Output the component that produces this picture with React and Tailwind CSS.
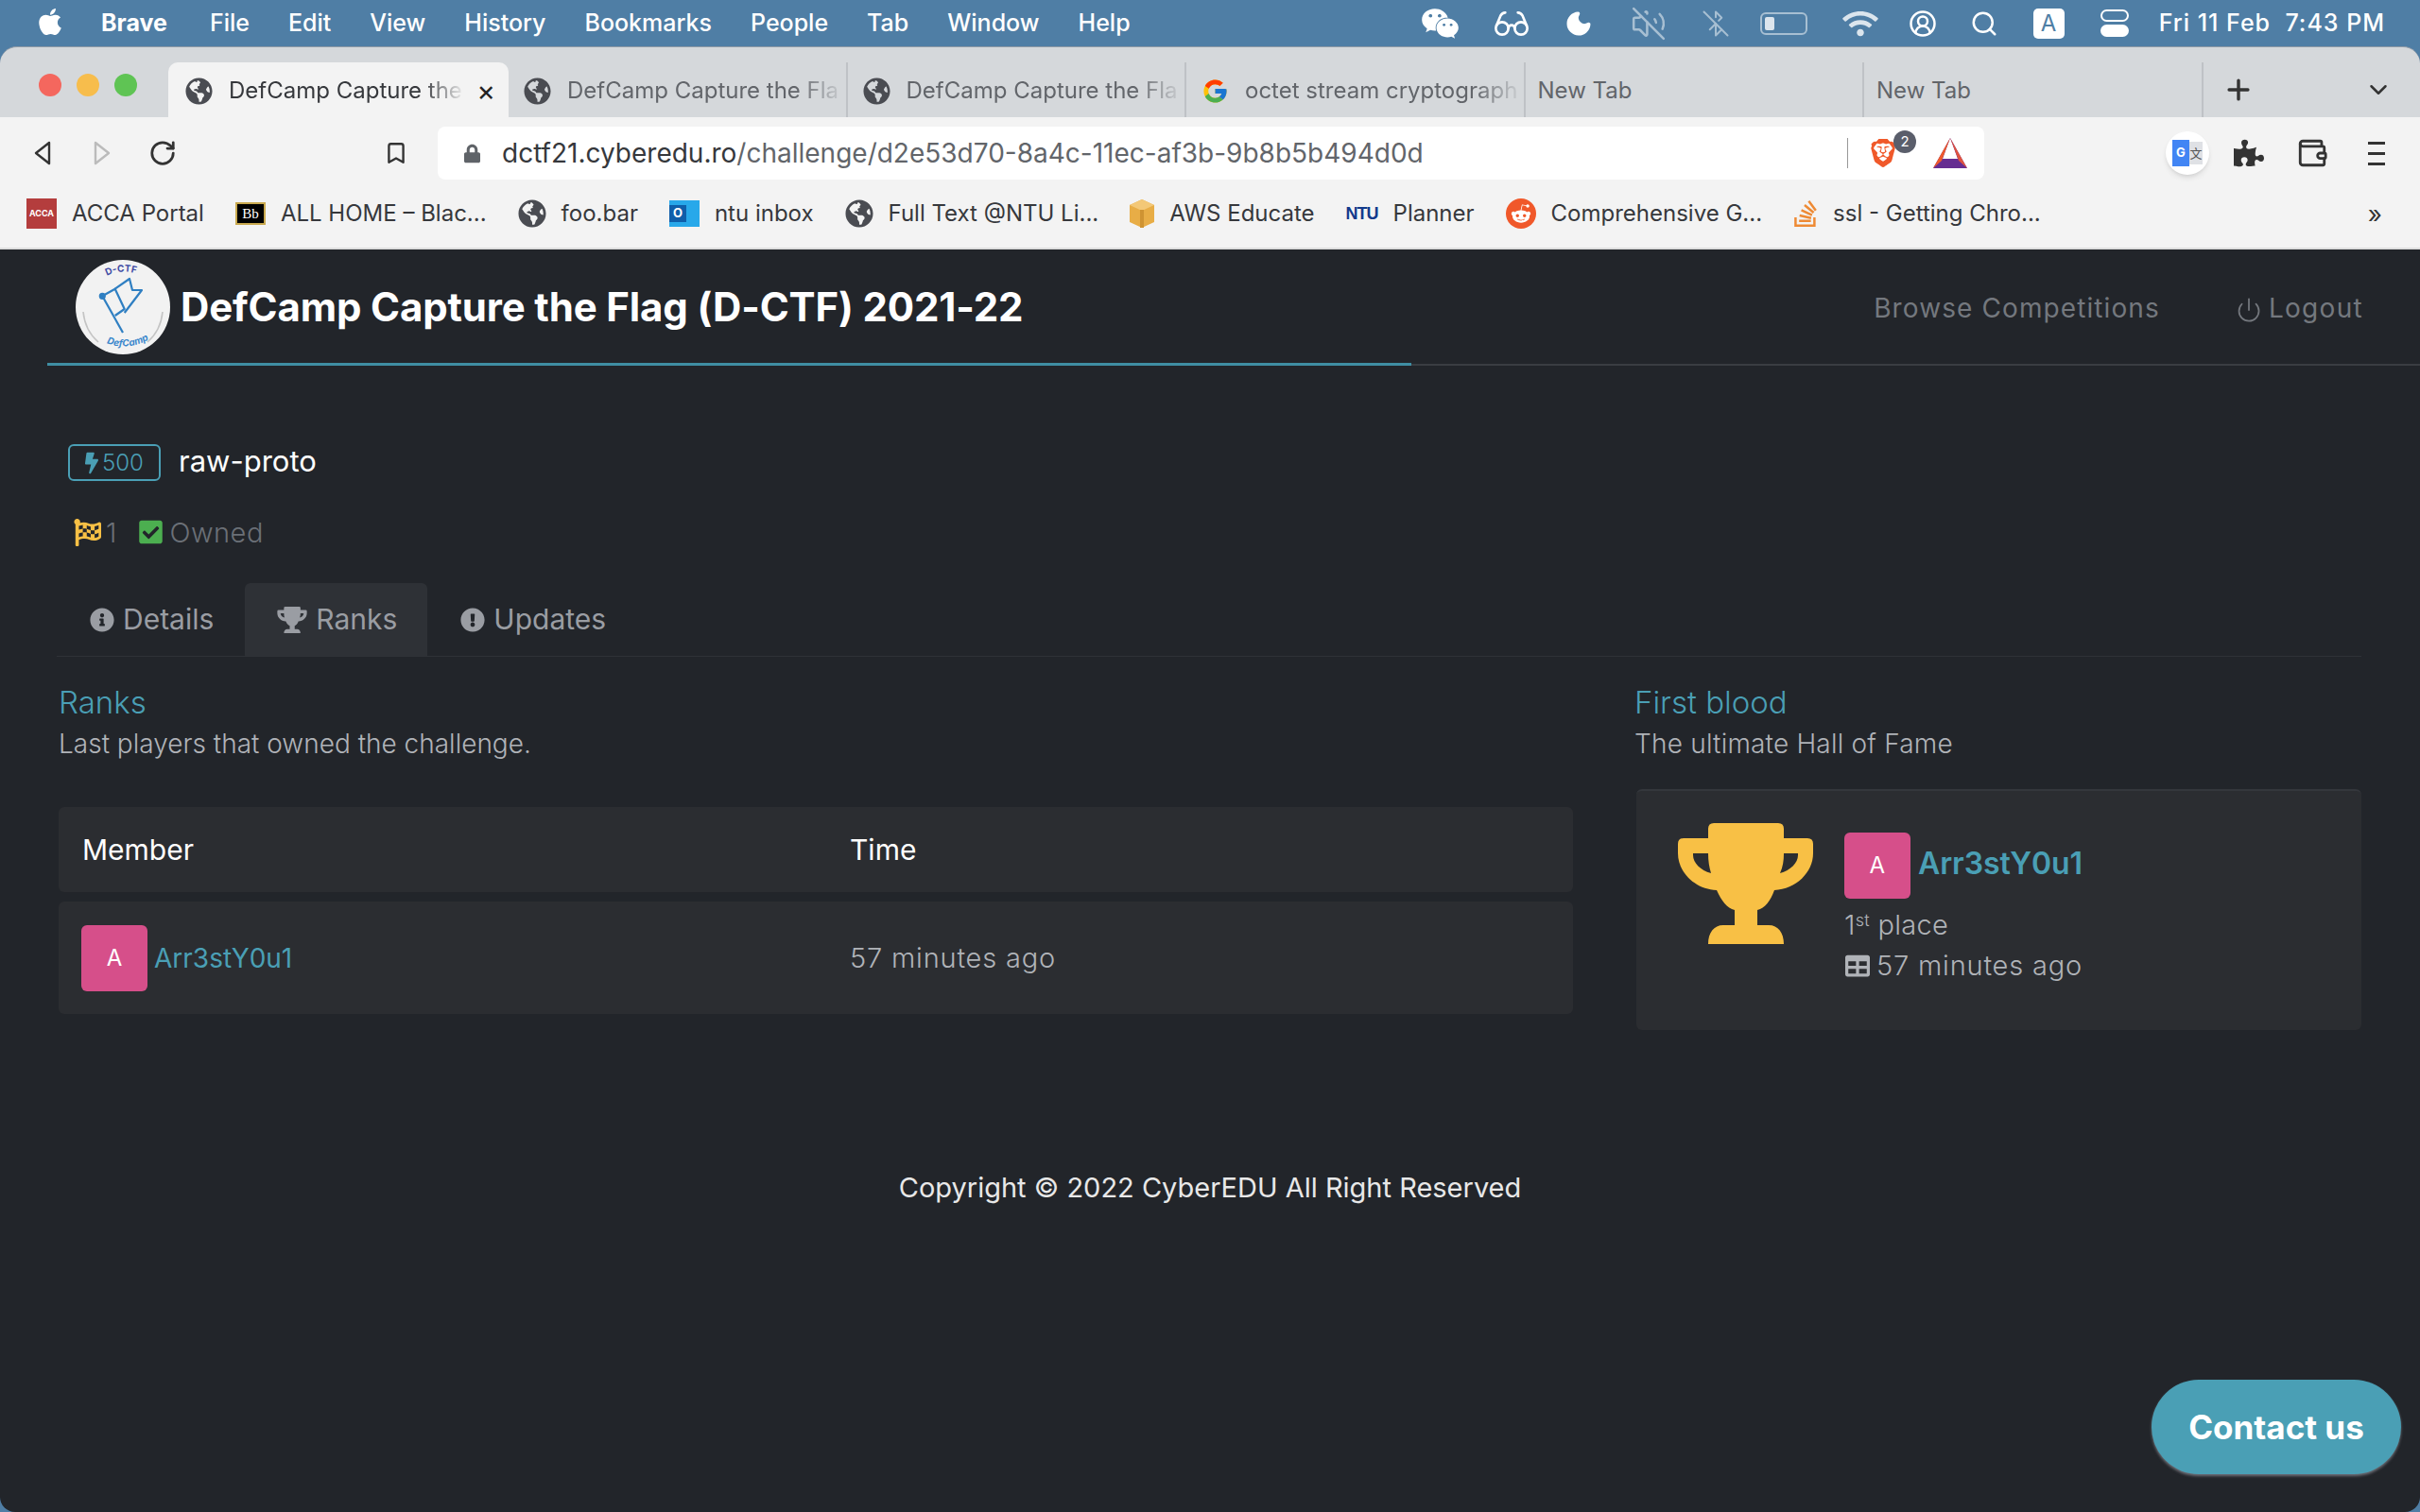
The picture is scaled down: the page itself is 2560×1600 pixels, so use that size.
import { Bookmark, BluetoothOff, CircleUserRound, ChevronDown, Glasses, Moon, Plus, RotateCw, Search, VolumeOff, Wallet, Power } from 'lucide-react';
import {
  FaApple,
  FaBolt,
  FaCheckSquare,
  FaExclamationCircle,
  FaFlagCheckered,
  FaGlobeAmericas,
  FaInfoCircle,
  FaLock,
  FaPuzzlePiece,
  FaRedditAlien,
  FaStackOverflow,
  FaTable,
  FaWeixin,
  FaWifi,
} from 'react-icons/fa';
import { FcGoogle } from 'react-icons/fc';
import { SiBrave } from 'react-icons/si';

const menuItems = ['File', 'Edit', 'View', 'History', 'Bookmarks', 'People', 'Tab', 'Window', 'Help'];

function Trophy({ className }) {
  return (
    <svg viewBox="0 0 143 128" className={className} fill="currentColor" fillRule="evenodd">
      <path d="M38 0 H106 Q112 0 112 6 V16 H137 Q143 16 143 22 V32 C143 52 125 70 102 71 C98 82 92 90 84 92 V108 H96 C106 108 112 116 112 128 H32 C32 116 38 108 48 108 H60 V92 C52 90 46 82 41 71 C18 70 0 52 0 32 V22 Q0 16 6 16 H32 V6 Q32 0 38 0 Z M16 32 V34 C16 42 24 50 35 53 C33 46 32 40 32 32 Z M127 32 H112 C112 40 111 46 108 53 C119 50 127 42 127 34 Z" />
    </svg>
  );
}

function MenuBar() {
  return (
    <div className="h-[49px] flex items-center text-white text-[25px] font-['Inter',sans-serif] shrink-0">
      <FaApple className="ml-[38px] w-[30px] h-[32px] mb-[4px]" />
      <span className="ml-[39px] font-bold">Brave</span>
      <div className="ml-[45px] flex gap-[41px] font-medium">
        {menuItems.map((m) => (
          <span key={m}>{m}</span>
        ))}
      </div>
      <div className="ml-auto mr-[37px] flex items-center">
        <FaWeixin className="w-[41px] h-[36px]" />
        <Glasses className="ml-[35px] w-[40px] h-[40px]" strokeWidth={1.6} />
        <Moon className="ml-[36px] w-[30px] h-[32px]" fill="white" />
        <VolumeOff className="ml-[40px] w-[38px] h-[38px] opacity-50" strokeWidth={1.6} />
        <BluetoothOff className="ml-[37px] w-[30px] h-[32px] opacity-50" strokeWidth={1.6} />
        <div className="ml-[32px] w-[50px] h-[24px] rounded-[6px] border-2 border-white/50 p-[3px]">
          <div className="w-[10px] h-full rounded-[2px] bg-white/80"></div>
        </div>
        <FaWifi className="ml-[37px] w-[38px] h-[30px] opacity-80" />
        <CircleUserRound className="ml-[32px] w-[30px] h-[30px]" strokeWidth={2} />
        <Search className="ml-[35px] w-[30px] h-[30px]" strokeWidth={2} />
        <div className="ml-[37px] w-[33px] h-[32px] bg-white rounded-[5px] flex items-center justify-center text-[#4f7ea5] text-[24px]">
          A
        </div>
        <div className="ml-[38px] w-[30px] h-[30px] flex flex-col gap-[3px]">
          <div className="h-[13px] rounded-full border-[2px] border-white"></div>
          <div className="h-[13px] rounded-full bg-white"></div>
        </div>
        <span className="ml-[32px] font-medium tracking-[1px] whitespace-pre">Fri 11 Feb  7:43 PM</span>
      </div>
    </div>
  );
}

function BrowserTab({ title, icon, active, fade }) {
  return (
    <div
      className={`h-[58px] flex items-center shrink-0 pt-[2px] text-[24px] ${
        active
          ? 'bg-[#f3f3f3] rounded-t-[10px] text-[#36383c] w-[360px] pl-[18px]'
          : `w-[358.5px] text-[#62656a] border-r-2 border-[#bfc2c6] ${icon ? 'pl-[16px]' : 'pl-[13px]'}`
      }`}
    >
      {icon}
      <span
        className={`whitespace-nowrap overflow-hidden flex-1 ${icon ? 'ml-[17px]' : ''} ${
          fade ? '[mask-image:linear-gradient(to_right,black_82%,transparent)]' : ''
        }`}
      >
        {title}
      </span>
      {active && <span className="text-[#222] text-[30px] leading-none ml-[12px] mr-[14px]">×</span>}
    </div>
  );
}

function TabStrip() {
  const globe = <FaGlobeAmericas className="w-[29px] h-[29px] text-[#4a4c52] shrink-0" />;
  return (
    <div className="h-[75px] flex items-end bg-[#d5d8db] shrink-0 border-t border-[#8d99a5] rounded-t-[18px]">
      <div className="flex gap-[16px] pl-[41px] w-[178px] h-full items-center pt-[6px] shrink-0">
        <div className="w-[24px] h-[24px] rounded-full bg-[#f4675e] shrink-0"></div>
        <div className="w-[24px] h-[24px] rounded-full bg-[#f7bd4c] shrink-0"></div>
        <div className="w-[24px] h-[24px] rounded-full bg-[#5fc454] shrink-0"></div>
      </div>
      <BrowserTab active fade title="DefCamp Capture the" icon={globe} />
      <BrowserTab fade title="DefCamp Capture the Fla" icon={globe} />
      <BrowserTab fade title="DefCamp Capture the Fla" icon={globe} />
      <BrowserTab fade title="octet stream cryptograph" icon={<FcGoogle className="w-[29px] h-[29px] shrink-0" />} />
      <BrowserTab title="New Tab" />
      <BrowserTab title="New Tab" />
      <div className="flex-1 h-[58px] flex items-center">
        <Plus className="ml-[20px] w-[34px] h-[34px] text-[#333]" strokeWidth={2.4} />
        <ChevronDown className="ml-auto mr-[29px] w-[30px] h-[30px] text-[#333]" strokeWidth={2} />
      </div>
    </div>
  );
}

function Toolbar() {
  return (
    <div className="h-[66px] pt-[10px] flex items-center bg-[#f3f3f3] shrink-0 relative">
      <svg viewBox="0 0 20 26" className="ml-[35px] w-[20px] h-[26px] shrink-0">
        <path d="M17 2 L3 13 L17 24 Z" fill="none" stroke="#333" strokeWidth="2.4" strokeLinejoin="round" />
      </svg>
      <svg viewBox="0 0 20 26" className="ml-[43px] w-[20px] h-[26px] shrink-0">
        <path d="M3 2 L17 13 L3 24 Z" fill="none" stroke="#bbb" strokeWidth="2.4" strokeLinejoin="round" />
      </svg>
      <RotateCw className="ml-[39px] w-[30px] h-[30px] text-[#333] shrink-0" strokeWidth={2.2} />
      <Bookmark className="ml-[219px] w-[26px] h-[32px] text-[#333] shrink-0" strokeWidth={2.2} />
      <div className="ml-[31px] w-[1636px] h-[56px] bg-white rounded-[8px] flex items-center pl-[28px] shrink-0">
        <FaLock className="w-[17px] h-[21px] text-[#5f6368]" />
        <span className="ml-[23px] text-[28px] text-[#36383c]">
          dctf21.cyberedu.ro<span className="text-[#62656a]">/challenge/d2e53d70-8a4c-11ec-af3b-9b8b5b494d0d</span>
        </span>
        <div className="ml-auto w-px h-[32px] bg-[#999]"></div>
        <div className="ml-[22px] relative">
          <SiBrave className="w-[30px] h-[36px] text-[#f0592a]" />
          <div className="absolute -top-[6px] -right-[20px] w-[24px] h-[24px] rounded-full bg-[#5a5e6b] text-white text-[15px] flex items-center justify-center">
            2
          </div>
        </div>
        <svg viewBox="0 0 36 32" className="ml-[38px] mr-[18px] w-[36px] h-[32px]">
          <polygon points="18,0 36,32 0,32" fill="#662d91" />
          <polygon points="18,0 26,22 10,22" fill="#fff" />
          <polygon points="18,0 36,32 27,24" fill="#e0533f" />
          <polygon points="18,0 9,24 0,32" fill="#f0592a" />
        </svg>
      </div>
      <div className="ml-[192px] w-[46px] h-[46px] rounded-full bg-white shadow-md flex items-center justify-center shrink-0">
        <div className="w-[18px] h-[28px] bg-[#4285f4] text-white text-[13px] font-bold flex items-center justify-center">G</div>
        <div className="w-[14px] h-[24px] bg-[#dfe1e5] text-[#555] text-[13px] flex items-center justify-center font-['Noto_Sans_CJK_SC',sans-serif]">文</div>
      </div>
      <FaPuzzlePiece className="ml-[26px] w-[32px] h-[34px] text-[#333] shrink-0" />
      <Wallet className="ml-[34px] w-[34px] h-[34px] text-[#333] shrink-0" strokeWidth={2} />
      <div className="ml-[42px] w-[18px] flex flex-col gap-[8px] shrink-0">
        <div className="h-[3px] bg-[#333]"></div>
        <div className="h-[3px] bg-[#333]"></div>
        <div className="h-[3px] bg-[#333]"></div>
      </div>
    </div>
  );
}

function BookmarkItem({ icon, label }) {
  return (
    <div className="flex items-center gap-[16px] shrink-0">
      {icon}
      <span className="text-[24px] text-[#36383c] whitespace-nowrap">{label}</span>
    </div>
  );
}

function BookmarksBar() {
  const globe = <FaGlobeAmericas className="w-[30px] h-[30px] text-[#4a4c52]" />;
  return (
    <div className="h-[74px] flex items-center gap-[33px] pl-[28px] pr-[40px] bg-[#f3f3f3] border-b-2 border-[#dddddd] shrink-0">
      <BookmarkItem
        label="ACCA Portal"
        icon={<div className="w-[32px] h-[32px] bg-[#b43d3d] text-white text-[9px] font-bold flex items-center justify-center">ACCA</div>}
      />
      <BookmarkItem
        label="ALL HOME – Blac..."
        icon={<div className="w-[32px] h-[24px] bg-black border-2 border-[#c9a94f] text-white text-[15px] font-['Liberation_Serif',serif] flex items-center justify-center">Bb</div>}
      />
      <BookmarkItem label="foo.bar" icon={globe} />
      <BookmarkItem
        label="ntu inbox"
        icon={
          <div className="w-[32px] h-[28px] bg-[#28a8ea] relative">
            <div className="absolute left-0 top-[5px] w-[18px] h-[18px] bg-[#0f5eaa] text-white text-[13px] font-bold flex items-center justify-center">O</div>
          </div>
        }
      />
      <BookmarkItem label="Full Text @NTU Li..." icon={globe} />
      <BookmarkItem
        label="AWS Educate"
        icon={
          <svg viewBox="0 0 26 30" className="w-[26px] h-[30px]">
            <polygon points="13,0 26,6 26,24 13,30 0,24 0,6" fill="#e8ad46" />
            <polygon points="13,0 26,6 13,12 0,6" fill="#f3c877" />
            <rect x="11" y="11" width="4" height="19" fill="#cf9332" />
          </svg>
        }
      />
      <BookmarkItem label="Planner" icon={<div className="w-[34px] text-[#123a8c] text-[18px] font-bold tracking-[-1px] font-['Liberation_Sans',sans-serif]">NTU</div>} />
      <BookmarkItem
        label="Comprehensive G..."
        icon={
          <div className="w-[32px] h-[32px] rounded-full bg-[#f0582a] flex items-center justify-center">
            <FaRedditAlien className="w-[22px] h-[22px] text-white" />
          </div>
        }
      />
      <BookmarkItem label="ssl - Getting Chro..." icon={<FaStackOverflow className="w-[26px] h-[32px] text-[#ee8a34]" />} />
      <span className="ml-auto text-[26px] text-[#333]">»</span>
    </div>
  );
}

function Logo() {
  return (
    <svg viewBox="0 0 100 100" className="w-[100px] h-[100px] shrink-0">
      <defs>
        <path id="logoTop" d="M33 17 Q50 8 72 17" fill="none" />
        <path id="logoBottom" d="M22 83 Q50 100 80 83" fill="none" />
      </defs>
      <circle cx="50" cy="50" r="50" fill="#f2f2f2" />
      <path d="M8 55 Q10 75 24 87" fill="none" stroke="#c4c4c4" strokeWidth="1.6" />
      <path d="M92 55 Q90 75 76 87" fill="none" stroke="#c4c4c4" strokeWidth="1.6" />
      <text fontSize="10" fontWeight="700" fill="#3f4ca5" fontFamily="Inter, sans-serif">
        <textPath href="#logoTop">D-CTF</textPath>
      </text>
      <text fontSize="10" fontWeight="700" fill="#3a87cc" fontStyle="italic" fontFamily="Inter, sans-serif">
        <textPath href="#logoBottom" startOffset="12">DefCamp</textPath>
      </text>
      <g fill="none" stroke="#2f7fc2" strokeWidth="2.2" strokeLinejoin="round">
        <circle cx="28.3" cy="38.3" r="2.5" fill="#2f7fc2" />
        <path d="M28.3 38.3 L50 77" />
        <path d="M28.3 38.3 L41.7 30.7 L51.7 52 L41.7 59" />
        <path d="M41.7 30.7 L57 20 L60 32 L70 32 L51.7 56" />
      </g>
    </svg>
  );
}

function Avatar() {
  return (
    <div className="w-[70px] h-[70px] rounded-[6px] bg-[#d64f8a] text-white text-[24px] font-normal flex items-center justify-center shrink-0">A</div>
  );
}

function PageTab({ icon, label, active }) {
  return (
    <div
      className={`h-[77px] flex items-center gap-[9px] ${
        active ? 'bg-[#2e3136] rounded-t-[6px] pl-[34px] w-[193px]' : 'pl-[35px] pr-[33px]'
      }`}
    >
      {icon}
      <span>{label}</span>
    </div>
  );
}

function Page() {
  return (
    <div className="flex-1 relative bg-[#22252a] font-['Inter',sans-serif] font-light overflow-hidden">
      <div className="h-[120px] pl-[80px] pr-[60px] flex items-start pt-[11px]">
        <Logo />
        <h1 className="ml-[11px] mt-[21px] text-white text-[42px] font-bold leading-[58px] tracking-[-0.15px] whitespace-nowrap">
          DefCamp Capture the Flag (D-CTF) 2021-22
        </h1>
        <div className="ml-auto mt-[30px] text-[#74787e] text-[28px] font-normal flex items-center">
          <span className="tracking-[1.1px]">Browse Competitions</span>
          <Power className="ml-[80px] w-[28px] h-[28px] mt-[4px]" strokeWidth={1.5} />
          <span className="ml-[7px] tracking-[1.3px]">Logout</span>
        </div>
      </div>
      <div className="ml-[50px] flex items-start h-[3px]">
        <div className="w-[1443px] h-[3px] bg-[#3f8ea3]"></div>
        <div className="flex-1 h-[2px] mt-[1px] bg-[#3a3d42]"></div>
      </div>

      <div className="ml-[72px] mt-[78px] flex items-center">
        <div className="w-[98px] h-[39px] rounded-[6px] border-2 border-[#4a9fb5] text-[#4a9fb5] flex items-center justify-center gap-[4px] text-[24px]">
          <FaBolt className="w-[14px] h-[26px]" />
          <span>500</span>
        </div>
        <span className="ml-[19px] mb-[3px] text-white text-[31px] font-normal">raw-proto</span>
      </div>

      <div className="ml-[78px] mt-[27px] flex items-center text-[#6b7077] text-[29px]">
        <FaFlagCheckered className="w-[29px] h-[29px] text-[#f8c045]" />
        <span className="ml-[5px]">1</span>
        <FaCheckSquare className="ml-[24px] w-[25px] h-[28px] text-[#4caf50]" />
        <span className="ml-[7px] tracking-[0.5px]">Owned</span>
      </div>

      <div className="ml-[60px] mr-[62px] mt-[32px] flex text-[#9a9da3] text-[30px] font-normal border-b border-[#2f3237]">
        <PageTab label="Details" icon={<FaInfoCircle className="w-[26px] h-[26px]" />} />
        <PageTab active label="Ranks" icon={<Trophy className="w-[32px] h-[28px]" />} />
        <PageTab label="Updates" icon={<FaExclamationCircle className="w-[26px] h-[26px]" />} />
      </div>

      <div className="ml-[62px] mt-[28px] flex">
        <div className="w-[1602px]">
          <div className="text-[#4a9fb5] text-[33px] leading-[40px]">Ranks</div>
          <div className="mt-[4px] text-[#b0b3b8] text-[28px] leading-[40px]">Last players that owned the challenge.</div>
          <div className="mt-[47px] h-[90px] rounded-[6px] bg-[#2b2d31] flex items-center text-white text-[30px] font-normal">
            <span className="ml-[25px] w-[812px]">Member</span>
            <span>Time</span>
          </div>
          <div className="mt-[10px] h-[119px] rounded-[6px] bg-[#2b2d31] flex items-center text-[28px]">
            <div className="ml-[24px] w-[813px] flex items-center">
              <Avatar />
              <span className="ml-[7px] text-[#4a9fb5] font-normal">Arr3stY0u1</span>
            </div>
            <span className="text-[#b0b3b8] text-[29px] tracking-[0.8px]">57 minutes ago</span>
          </div>
        </div>
        <div className="ml-[65px] w-[769px]">
          <div className="text-[#4a9fb5] text-[33px] leading-[40px]">First blood</div>
          <div className="mt-[4px] text-[#b0b3b8] text-[28px] leading-[40px] tracking-[0.2px]">The ultimate Hall of Fame</div>
          <div className="mt-[28px] ml-[2px] h-[255px] rounded-[6px] bg-[#2b2d31] border-t-2 border-[#34373c] flex pl-[44px] pt-[34px]">
            <Trophy className="w-[143px] h-[128px] text-[#f8c045] shrink-0" />
            <div className="ml-[33px] pt-[10px] text-[#b0b3b8] text-[29px] tracking-[0.3px]">
              <div className="flex items-center">
                <Avatar />
                <span className="ml-[8px] mb-[4px] text-[#4a9fb5] text-[32px] font-semibold tracking-[-0.1px]">Arr3stY0u1</span>
              </div>
              <div className="mt-[8px] leading-[40px]">
                1<sup className="text-[18px]">st</sup> place
              </div>
              <div className="mt-[3px] flex items-center gap-[6px] leading-[40px]">
                <FaTable className="w-[28px] h-[26px]" />
                <span className="tracking-[0.8px]">57 minutes ago</span>
              </div>
            </div>
          </div>
        </div>
      </div>

      <div className="mt-[145px] text-center text-[#e8e8e8] text-[29px] font-normal">Copyright © 2022 CyberEDU All Right Reserved</div>

      <div className="absolute right-[20px] bottom-[40px] w-[264px] h-[100px] rounded-[50px] bg-[#4a9fb5] text-white text-[35px] font-bold flex items-center justify-center shadow-[0_2px_3px_rgba(160,160,170,0.6)]">
        Contact us
      </div>
    </div>
  );
}

export default function App() {
  return (
    <div className="h-screen w-full overflow-hidden flex flex-col bg-[#4f7ea5] font-['Inter',sans-serif]">
      <MenuBar />
      <div className="flex-1 flex flex-col rounded-b-[16px] overflow-hidden">
        <TabStrip />
        <Toolbar />
        <BookmarksBar />
        <Page />
      </div>
    </div>
  );
}
